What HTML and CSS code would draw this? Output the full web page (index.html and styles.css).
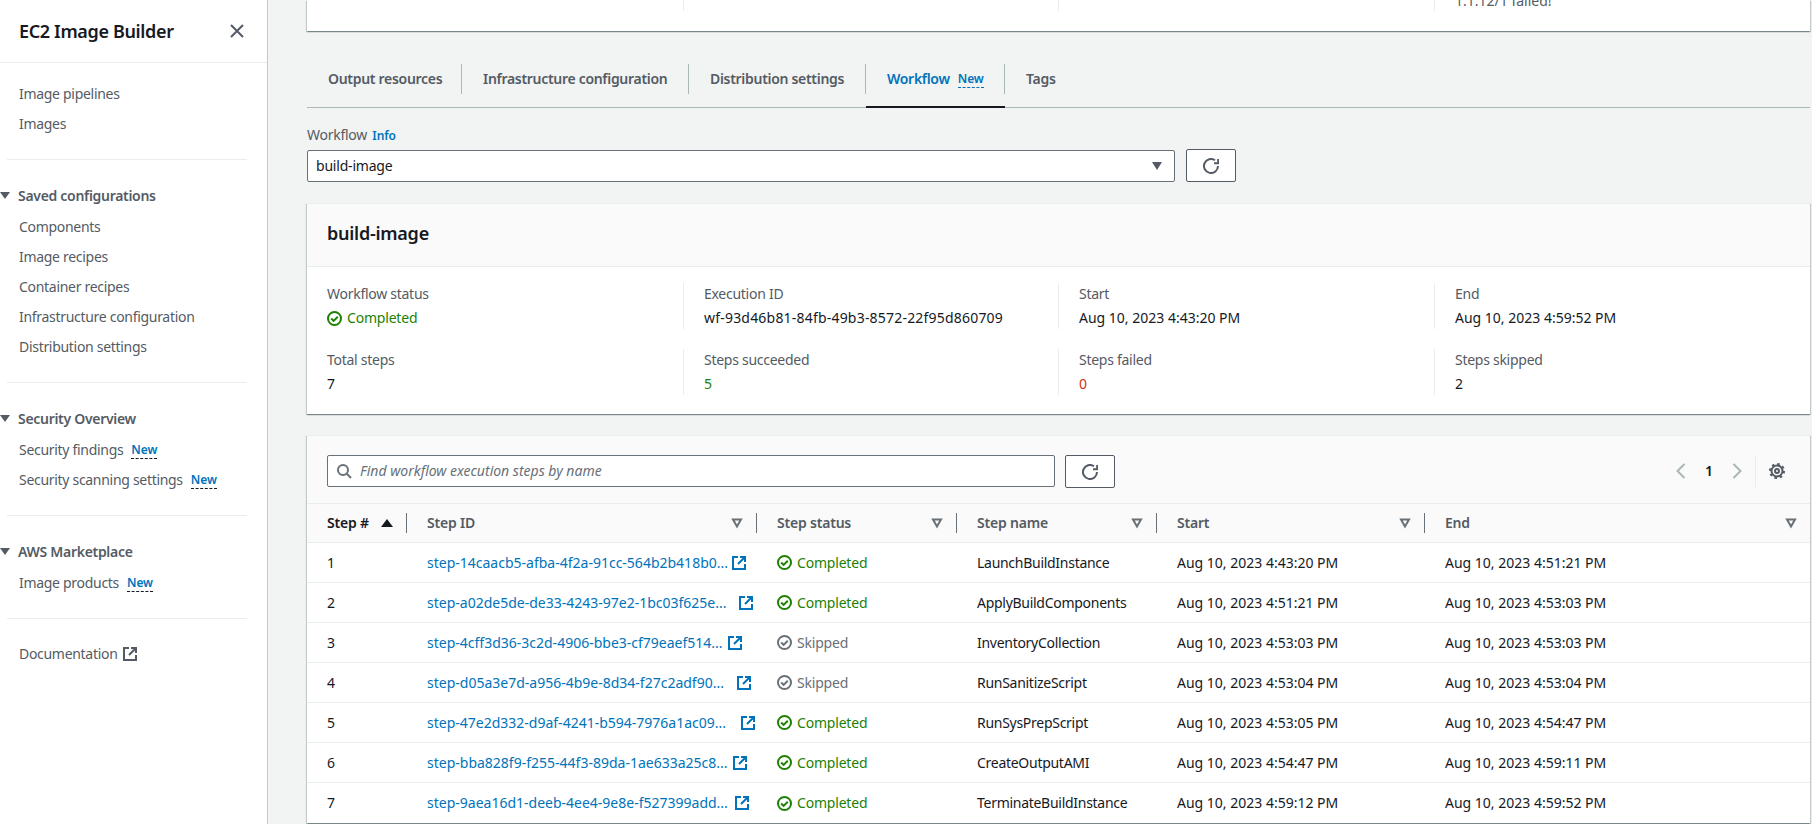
FILE: index.html
```html
<!DOCTYPE html>
<html lang="en">
<head>
<meta charset="utf-8">
<title>EC2 Image Builder</title>
<link rel="stylesheet" href="styles.css">
</head>
<body>
<svg class="defs" width="0" height="0" aria-hidden="true">
  <symbol id="ext" viewBox="0 0 14 14"><path d="M13 8v5H1V1h5" fill="none" stroke="currentColor" stroke-width="2"/><path d="M6 8l6-6M8 1h5v5" fill="none" stroke="currentColor" stroke-width="2"/></symbol>
  <symbol id="ok" viewBox="0 0 15 15"><circle cx="7.5" cy="7.500" r="6.500" fill="none" stroke="currentColor" stroke-width="2"/><path d="M4.200 7.500l2.400 2.400 4.200-4.200" fill="none" stroke="currentColor" stroke-width="2"/></symbol>
  <symbol id="refresh" viewBox="0 0 16 16"><path d="M15 8a7 7 0 1 1-3-5.740" fill="none" stroke="currentColor" stroke-width="2"/><path d="M15.200 1v4.200H11" fill="none" stroke="currentColor" stroke-width="2"/></symbol>
  <symbol id="filter" viewBox="0 0 12 12"><path d="M2 2.500h8L6 9.500z" fill="none" stroke="currentColor" stroke-width="2"/></symbol>
</svg>
<div class="app">
  <aside class="side">
    <header class="side-head">
      <h1 class="side-title">EC2 Image Builder</h1>
      <svg class="side-close" viewBox="0 0 16 16"><path d="M2 2l12 12M14 2L2 14" fill="none" stroke="currentColor" stroke-width="2"/></svg>
    </header>
    <nav class="side-nav">
      <a class="nav-item">Image pipelines</a>
      <a class="nav-item">Images</a>
      <hr class="nav-rule">
      <div class="nav-group"><i class="nav-caret"></i>Saved configurations</div>
      <a class="nav-item">Components</a>
      <a class="nav-item">Image recipes</a>
      <a class="nav-item">Container recipes</a>
      <a class="nav-item">Infrastructure configuration</a>
      <a class="nav-item">Distribution settings</a>
      <hr class="nav-rule">
      <div class="nav-group"><i class="nav-caret"></i>Security Overview</div>
      <a class="nav-item">Security findings <span class="new">New</span></a>
      <a class="nav-item">Security scanning settings <span class="new">New</span></a>
      <hr class="nav-rule">
      <div class="nav-group"><i class="nav-caret"></i>AWS Marketplace</div>
      <a class="nav-item">Image products <span class="new">New</span></a>
      <hr class="nav-rule">
      <a class="nav-item">Documentation <svg class="ico-doc"><use href="#ext"/></svg></a>
    </nav>
  </aside>
  <main class="main">
    <section class="card card-top">
      <div class="top-cell"></div>
      <div class="top-cell"></div>
      <div class="top-cell"></div>
      <div class="top-cell top-last"><span>1.1.12/1 failed!</span></div>
    </section>

    <div class="tabs">
      <a class="tab"><span class="tab-label">Output resources</span></a>
      <a class="tab"><span class="tab-label">Infrastructure configuration</span></a>
      <a class="tab"><span class="tab-label">Distribution settings</span></a>
      <a class="tab tab-on"><span class="tab-label">Workflow <span class="new new-blue">New</span></span></a>
      <a class="tab tab-end"><span class="tab-label">Tags</span></a>
    </div>

    <div class="field-label">Workflow <a class="info">Info</a></div>
    <div class="field-row">
      <div class="select"><span>build-image</span><i class="select-caret"></i></div>
      <button class="btn"><svg class="ico"><use href="#refresh"/></svg></button>
    </div>

    <section class="card card-sum">
      <h2 class="card-title">build-image</h2>
      <div class="sum-grid">
        <div class="sum-cell"><div class="k">Workflow status</div><div class="v v-ok"><svg class="ico-st"><use href="#ok"/></svg>Completed</div></div>
        <div class="sum-cell"><div class="k">Execution ID</div><div class="v v-id">wf-93d46b81-84fb-49b3-8572-22f95d860709</div></div>
        <div class="sum-cell"><div class="k">Start</div><div class="v">Aug 10, 2023 4:43:20 PM</div></div>
        <div class="sum-cell sum-last"><div class="k">End</div><div class="v">Aug 10, 2023 4:59:52 PM</div></div>
        <div class="sum-cell"><div class="k">Total steps</div><div class="v">7</div></div>
        <div class="sum-cell"><div class="k">Steps succeeded</div><div class="v v-green">5</div></div>
        <div class="sum-cell"><div class="k">Steps failed</div><div class="v v-red">0</div></div>
        <div class="sum-cell sum-last"><div class="k">Steps skipped</div><div class="v">2</div></div>
      </div>
    </section>

    <section class="card card-table">
      <div class="toolbar">
        <div class="search">
          <svg class="ico ico-search" viewBox="0 0 16 16"><circle cx="7" cy="7" r="5" fill="none" stroke="currentColor" stroke-width="2"/><path d="M15 15l-4.500-4.500" fill="none" stroke="currentColor" stroke-width="2"/></svg>
          <span>Find workflow execution steps by name</span>
        </div>
        <button class="btn btn-tb"><svg class="ico"><use href="#refresh"/></svg></button>
        <div class="pager">
          <svg class="pg-arrow" viewBox="0 0 16 16"><path d="M11.500 1l-7 7 7 7" fill="none" stroke="currentColor" stroke-width="2"/></svg>
          <span class="pg-num">1</span>
          <svg class="pg-arrow" viewBox="0 0 16 16"><path d="M4.500 1l7 7-7 7" fill="none" stroke="currentColor" stroke-width="2"/></svg>
          <span class="pg-settings">
            <svg class="ico" viewBox="0 0 16 16"><circle cx="8" cy="8" r="2" fill="none" stroke="currentColor" stroke-width="2"/><circle cx="8" cy="8" r="5.500" fill="none" stroke="currentColor" stroke-width="2"/><circle class="gear-teeth" cx="8" cy="8" r="7"/></svg>
          </span>
        </div>
      </div>
      <table class="steps">
        <colgroup><col class="c1"><col class="c2"><col class="c3"><col class="c3"><col class="c5"><col></colgroup>
        <thead>
          <tr>
            <th><div class="th">Step #<i class="sort-up"></i></div></th>
            <th><div class="th">Step ID<svg class="ico-f"><use href="#filter"/></svg></div></th>
            <th><div class="th">Step status<svg class="ico-f"><use href="#filter"/></svg></div></th>
            <th><div class="th">Step name<svg class="ico-f"><use href="#filter"/></svg></div></th>
            <th><div class="th">Start<svg class="ico-f"><use href="#filter"/></svg></div></th>
            <th><div class="th th-end">End<svg class="ico-f"><use href="#filter"/></svg></div></th>
          </tr>
        </thead>
        <tbody>
          <tr><td>1</td><td><a class="step-link"><span class="step-id id1">step-14caacb5-afba-4f2a-91cc-564b2b418b0...</span><svg class="ico-x"><use href="#ext"/></svg></a></td><td><div class="st st-ok"><svg class="ico-st"><use href="#ok"/></svg>Completed</div></td><td class="name">LaunchBuildInstance</td><td>Aug 10, 2023 4:43:20 PM</td><td>Aug 10, 2023 4:51:21 PM</td></tr>
          <tr><td>2</td><td><a class="step-link"><span class="step-id id2">step-a02de5de-de33-4243-97e2-1bc03f625e...</span><svg class="ico-x"><use href="#ext"/></svg></a></td><td><div class="st st-ok"><svg class="ico-st"><use href="#ok"/></svg>Completed</div></td><td class="name">ApplyBuildComponents</td><td>Aug 10, 2023 4:51:21 PM</td><td>Aug 10, 2023 4:53:03 PM</td></tr>
          <tr><td>3</td><td><a class="step-link"><span class="step-id id3">step-4cff3d36-3c2d-4906-bbe3-cf79eaef514...</span><svg class="ico-x"><use href="#ext"/></svg></a></td><td><div class="st st-skip"><svg class="ico-st"><use href="#ok"/></svg>Skipped</div></td><td class="name">InventoryCollection</td><td>Aug 10, 2023 4:53:03 PM</td><td>Aug 10, 2023 4:53:03 PM</td></tr>
          <tr><td>4</td><td><a class="step-link"><span class="step-id id4">step-d05a3e7d-a956-4b9e-8d34-f27c2adf90...</span><svg class="ico-x"><use href="#ext"/></svg></a></td><td><div class="st st-skip"><svg class="ico-st"><use href="#ok"/></svg>Skipped</div></td><td class="name">RunSanitizeScript</td><td>Aug 10, 2023 4:53:04 PM</td><td>Aug 10, 2023 4:53:04 PM</td></tr>
          <tr><td>5</td><td><a class="step-link"><span class="step-id id5">step-47e2d332-d9af-4241-b594-7976a1ac09...</span><svg class="ico-x"><use href="#ext"/></svg></a></td><td><div class="st st-ok"><svg class="ico-st"><use href="#ok"/></svg>Completed</div></td><td class="name">RunSysPrepScript</td><td>Aug 10, 2023 4:53:05 PM</td><td>Aug 10, 2023 4:54:47 PM</td></tr>
          <tr><td>6</td><td><a class="step-link"><span class="step-id id6">step-bba828f9-f255-44f3-89da-1ae633a25c8...</span><svg class="ico-x"><use href="#ext"/></svg></a></td><td><div class="st st-ok"><svg class="ico-st"><use href="#ok"/></svg>Completed</div></td><td class="name">CreateOutputAMI</td><td>Aug 10, 2023 4:54:47 PM</td><td>Aug 10, 2023 4:59:11 PM</td></tr>
          <tr><td>7</td><td><a class="step-link"><span class="step-id id7">step-9aea16d1-deeb-4ee4-9e8e-f527399add...</span><svg class="ico-x"><use href="#ext"/></svg></a></td><td><div class="st st-ok"><svg class="ico-st"><use href="#ok"/></svg>Completed</div></td><td class="name">TerminateBuildInstance</td><td>Aug 10, 2023 4:59:12 PM</td><td>Aug 10, 2023 4:59:52 PM</td></tr>
        </tbody>
      </table>
    </section>
  </main>
</div>
</body>
</html>
```
FILE: styles.css
```css
* { box-sizing: border-box; }
html, body { margin: 0; height: 824px; overflow: hidden; }
body { font: 14px/20px "Noto Sans", "Open Sans", sans-serif; color: #16191f; background: #f2f3f3; }
.defs { display: block; height: 0; }
.app { display: flex; height: 824px; }
a { color: inherit; text-decoration: none; }

/* side navigation */
.side { flex: none; width: 268px; background: #fff; border-right: 1px solid #c6c9c9; color: #545b64; }
.side-head { height: 63px; display: flex; align-items: center; justify-content: space-between; padding: 0 22px 1px 19px; border-bottom: 1px solid #eaeded; }
.side-title { margin: 0; font-size: 18px; font-weight: 600; line-height: 24px; color: #16191f; letter-spacing: -.35px; }
.side-close { width: 16px; height: 16px; color: #545b64; }
.side-nav { display: flex; flex-direction: column; padding-top: 16px; }
.nav-item { height: 30px; line-height: 30px; padding-left: 19px; white-space: nowrap; display: flex; align-items: center; letter-spacing: -.3px; }
.nav-rule { width: 240px; height: 1px; margin: 20px 0 20px 7px; border: 0; background: #eaeded; }
.nav-group { height: 32px; display: flex; align-items: center; font-weight: 600; padding-bottom: 1px; letter-spacing: -.3px; }
.nav-caret { width: 0; height: 0; margin-right: 8px; border: solid transparent; border-width: 7px 5px 0; border-top-color: #545b64; }
.new { font-size: 12px; font-weight: 600; line-height: 16px; color: #0073bb; border-bottom: 1px dashed #16191f; margin-left: 8px; letter-spacing: -.1px; }
.new-blue { border-bottom-color: #0073bb; }
.ico-doc { width: 14px; height: 14px; margin-left: 5px; }

/* page */
.main { flex: 1; min-width: 0; padding: 0 2px 0 39px; }
.card { background: #fff; box-shadow: 0 1px 1px rgba(0, 28, 36, .3), 1px 1px 1px rgba(0, 28, 36, .15), -1px 1px 1px rgba(0, 28, 36, .15); }
.card-top { height: 31px; display: grid; grid-template-columns: 377px 375px 376px 1fr; }
.top-cell { height: 11px; border-right: 1px solid #eaeded; display: flex; align-items: flex-end; padding-left: 20px; color: #545b64; }
.top-last { border-right: 0; white-space: nowrap; }

.tabs { display: flex; margin-top: 33px; height: 44px; border-bottom: 1px solid #aab7b8; }
.tab { width: 155px; height: 44px; border-bottom: 2px solid transparent; font-weight: 600; color: #545b64; letter-spacing: -.3px; }
.tab:nth-child(2) { width: 227px; }
.tab:nth-child(3) { width: 177px; }
.tab:nth-child(4) { width: 139px; }
.tab-label { display: flex; align-items: center; height: 30px; padding-left: 21px; border-right: 1px solid #aab7b8; white-space: nowrap; }
.tab-end .tab-label { border-right: 0; }
.tab-on { color: #0073bb; border-bottom-color: #16191f; }

.field-label { margin-top: 17px; height: 20px; color: #545b64; letter-spacing: -.27px; }
.info { font-size: 12px; font-weight: 600; color: #0073bb; margin-left: 2px; letter-spacing: -.1px; }
.field-row { display: flex; gap: 11px; margin-top: 4px; }
.select { width: 868px; height: 32px; margin-top: 1px; display: flex; align-items: center; justify-content: space-between; padding: 0 12px 0 8px; background: #fff; border: 1px solid #687078; border-radius: 2px; letter-spacing: -.2px; }
.select-caret { width: 0; height: 0; border: solid transparent; border-width: 8px 5px 0; border-top-color: #545b64; }
.btn { width: 50px; height: 33px; padding: 0; display: flex; align-items: center; justify-content: center; background: #fff; border: 1px solid #545b64; border-radius: 2px; color: #545b64; }
.ico { width: 16px; height: 16px; flex: none; }
.ico-st { width: 15px; height: 15px; flex: none; }

.card-sum { margin-top: 21px; height: 211px; }
.card-title { margin: 0; height: 64px; padding: 0 20px 4px; display: flex; align-items: center; font-size: 18px; font-weight: 600; line-height: 24px; letter-spacing: -.25px; background: #fafafa; border-top: 1px solid #eaeded; border-bottom: 1px solid #eaeded; }
.sum-grid { display: grid; grid-template-columns: 377px 375px 376px 1fr; row-gap: 20px; padding-top: 16px; }
.sum-cell { height: 46px; padding-left: 20px; border-right: 1px solid #eaeded; }
.sum-last { border-right: 0; }
.k { height: 24px; line-height: 22px; color: #545b64; letter-spacing: -.27px; }
.v { height: 22px; line-height: 22px; display: flex; align-items: center; gap: 5px; }
.v-ok { letter-spacing: -.2px; }
.v-id { letter-spacing: .2px; }
.v-ok, .v-green { color: #1d8102; }
.v-red { color: #d13212; }

.card-table { margin-top: 21px; height: 388px; }
.toolbar { height: 69px; padding: 19px 25px 0 20px; display: flex; align-items: flex-start; background: #fafafa; border-top: 1px solid #eaeded; border-bottom: 1px solid #eaeded; }
.search { width: 728px; height: 32px; display: flex; align-items: center; gap: 8px; padding-left: 8px; background: #fff; border: 1px solid #687078; border-radius: 2px; font-style: italic; color: #687078; }
.ico-search { color: #687078; }
.btn-tb { margin-left: 10px; }
.pager { margin-left: auto; height: 32px; display: flex; align-items: center; color: #aab7b8; }
.pg-arrow { width: 16px; height: 16px; }
.pg-num { width: 40px; text-align: center; font-weight: 600; color: #16191f; }
.pg-settings { display: flex; height: 32px; align-items: center; margin-left: 10px; padding-left: 13px; border-left: 1px solid #eaeded; color: #545b64; }
.gear-teeth { fill: none; stroke: currentColor; stroke-width: 2; stroke-dasharray: 2.500 3; }

.steps { width: 100%; border-collapse: separate; border-spacing: 0; table-layout: fixed; }
.c1 { width: 100px; }
.c2 { width: 350px; }
.c3 { width: 200px; }
.c5 { width: 268px; }
.steps th { height: 39px; padding: 0; background: #fafafa; border-bottom: 1px solid #eaeded; text-align: left; font-weight: 600; color: #545b64; letter-spacing: -.2px; }
.steps th:first-child { color: #16191f; }
.th { height: 20px; display: flex; align-items: center; justify-content: space-between; padding: 0 13px 0 20px; border-right: 1px solid #687078; }
.th-end { border-right: 0; }
.sort-up { width: 0; height: 0; border: solid transparent; border-width: 0 6px 8px; border-bottom-color: #16191f; }
.ico-f { width: 12px; height: 12px; color: #687078; }
.steps td { height: 40px; padding: 0 20px; white-space: nowrap; border-bottom: 1px solid #eaeded; color: #16191f; }
.steps tr:last-child td { border-bottom: 0; }
.steps td.name { letter-spacing: -.28px; }
.step-link { display: flex; align-items: center; color: #0073bb; }
.step-id { flex: none; }
.ico-x { width: 14px; height: 14px; flex: none; }
.id1 { width: 305px; }
.id2 { width: 312px; }
.id3 { width: 301px; }
.id4 { width: 310px; }
.id5 { width: 314px; }
.id6 { width: 306px; }
.id7 { width: 308px; }
.st { display: flex; align-items: center; gap: 5px; letter-spacing: -.2px; }
.st-ok { color: #1d8102; }
.st-skip { color: #687078; }
```
